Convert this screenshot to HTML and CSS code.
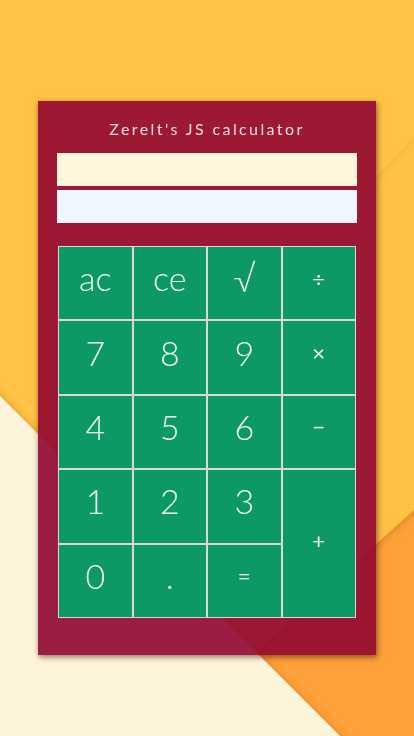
FILE: index.html
```html
<!DOCTYPE html>
<html lang="en">
<head>
<meta charset="utf-8">
<title>Zerelt's JS calculator</title>
<link rel="stylesheet" href="styles.css">
</head>
<body>
<svg class="wallpaper" viewBox="0 0 414 736" preserveAspectRatio="none" aria-hidden="true">
  <defs>
    <filter id="shade" x="-20%" y="-20%" width="140%" height="140%">
      <feDropShadow dx="0" dy="1" stdDeviation="4" flood-color="#7a3a00" flood-opacity="0.35"/>
    </filter>
    <filter id="shadeSoft" x="-20%" y="-20%" width="140%" height="140%">
      <feDropShadow dx="0" dy="1" stdDeviation="4" flood-color="#b06a00" flood-opacity="0.18"/>
    </filter>
  </defs>
  <rect x="0" y="0" width="414" height="736" fill="#ffa13a"/>
  <polygon points="-20,-20 434,-20 434,492 -20,900" fill="#ffc244" filter="url(#shade)"/>
  <polygon points="-20,-20 434,-20 434,115 -20,602" fill="#ffc344" filter="url(#shadeSoft)"/>
  <polygon points="-20,376 420,816 -20,816" fill="#fef4d9" filter="url(#shade)"/>
</svg>

<main class="calculator">
  <h1 class="title">Zerelt's JS calculator</h1>
  <div class="display display-history"></div>
  <div class="display display-current"></div>
  <div class="keys">
    <button class="key">ac</button>
    <button class="key">ce</button>
    <button class="key key-root">√</button>
    <button class="key key-op">÷</button>
    <button class="key">7</button>
    <button class="key">8</button>
    <button class="key">9</button>
    <button class="key key-op">×</button>
    <button class="key">4</button>
    <button class="key">5</button>
    <button class="key">6</button>
    <button class="key key-op">−</button>
    <button class="key">1</button>
    <button class="key">2</button>
    <button class="key">3</button>
    <button class="key key-op key-plus">+</button>
    <button class="key">0</button>
    <button class="key">.</button>
    <button class="key key-op">=</button>
  </div>
</main>
</body>
</html>
```

FILE: styles.css
```css
* {
  box-sizing: border-box;
}

html, body {
  margin: 0;
  padding: 0;
}

body {
  min-height: 100vh;
  background: #ffc244;
  font-family: "Lato", "Open Sans", sans-serif;
  overflow: hidden;
}

.wallpaper {
  position: fixed;
  left: 0;
  top: 0;
  width: 100%;
  height: 100%;
  z-index: 0;
}

.calculator {
  position: relative;
  z-index: 1;
  width: 338px;
  margin: 101px auto 0;
  padding: 16px 0 37px;
  background: rgba(145, 5, 49, 0.9);
  box-shadow: 1px 2px 6px rgba(40, 0, 0, 0.55);
  display: flex;
  flex-direction: column;
  align-items: center;
}

.title {
  margin: 0;
  height: 24px;
  line-height: 24px;
  font-size: 16px;
  font-weight: 400;
  letter-spacing: 2.4px;
  color: #f0dbe4;
}

.display {
  width: 300px;
  height: 33px;
}

.display-history {
  margin-top: 12px;
  background: #fff6db;
}

.display-current {
  margin-top: 4px;
  background: #eef6ff;
}

.keys {
  margin-top: 23px;
  width: 298px;
  height: 372px;
  display: grid;
  grid-template-columns: repeat(4, 1fr);
  grid-template-rows: repeat(5, 1fr);
}

.key {
  margin: 0;
  padding: 0 0 9px;
  border: 1px solid #d9d9d6;
  background: #0c9964;
  color: #f5f8f4;
  font-family: "Lato", "Open Sans", sans-serif;
  font-size: 34px;
  font-weight: 300;
  display: flex;
  align-items: center;
  justify-content: center;
  line-height: 1.2;
}

.key-op {
  font-size: 22px;
  font-weight: 400;
}

.key-root {
  font-size: 36px;
  font-weight: 300;
}

.key-plus {
  grid-column: 4;
  grid-row: 4 / span 2;
  padding-bottom: 4px;
}
```
